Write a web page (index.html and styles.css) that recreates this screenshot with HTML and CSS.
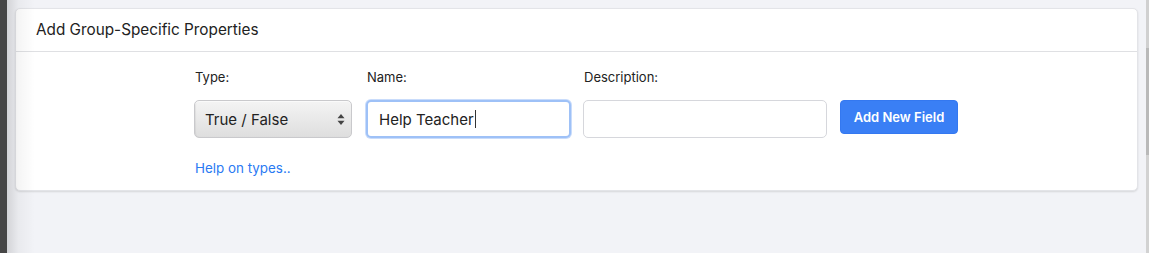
FILE: index.html
```html
<!DOCTYPE html>
<html>
<head>
<meta charset="utf-8">
<link rel="stylesheet" href="styles.css">
</head>
<body>
<div class="frame">
  <div class="edge"></div>
  <main class="page">
    <div class="shade"></div>
    <section class="card">
      <header class="card-header">Add Group-Specific Properties</header>
      <div class="card-body">
        <div class="fields">
          <div class="field f-type">
            <label class="lbl">Type:</label>
            <div class="select">
              <span>True / False</span>
              <svg class="arrows" width="8" height="13" viewBox="0 0 8 13"><path d="M4 1 L7.5 5.2 L0.5 5.2 Z" fill="#444"/><path d="M4 12 L7.5 7.8 L0.5 7.8 Z" fill="#444"/></svg>
            </div>
          </div>
          <div class="field f-name">
            <label class="lbl">Name:</label>
            <div class="input focused"><span>Help Teacher</span><i class="caret"></i></div>
          </div>
          <div class="field f-desc">
            <label class="lbl">Description:</label>
            <div class="input"></div>
          </div>
          <div class="field f-btn">
            <button class="btn">Add New Field</button>
          </div>
        </div>
        <a class="help" href="#">Help on types..</a>
      </div>
    </section>
  </main>
  <div class="scroll"></div>
</div>
</body>
</html>
```
FILE: styles.css
```css
* { box-sizing: border-box; }
html, body { margin: 0; padding: 0; }
body {
  width: 1149px;
  height: 253px;
  overflow: hidden;
  background: #f2f3f7;
  font-family: Inter, "Liberation Sans", Arial, sans-serif;
  color: #222;
}
.frame {
  display: flex;
  height: 253px;
}
.edge {
  width: 7px;
  flex: none;
  background: #464646;
}
.page {
  position: relative;
  flex: 1;
  padding: 8px 8px 0 8px;
  background: #f2f3f7;
}
.shade {
  position: absolute;
  left: 0; top: 0; bottom: 0;
  width: 28px;
  background: linear-gradient(to right, rgba(0,0,0,0.13), rgba(0,0,0,0.04) 40%, rgba(0,0,0,0));
  pointer-events: none;
  z-index: 2;
}
.scroll {
  width: 3px;
  flex: none;
  background: linear-gradient(to bottom, #d0d0d0 0, #d0d0d0 48px, #b9b9b9 48px, #b9b9b9 155px, #d2d2d2 155px);
}
.card {
  background: #fff;
  border: 1px solid #e3e4e8;
  border-radius: 5px;
  box-shadow: 0 1px 2px rgba(0,0,0,0.12);
  height: 183px;
}
.card-header {
  height: 43px;
  padding: 11px 0 0 20px;
  font-size: 15.3px;
  color: #222;
  border-bottom: 1px solid #dfe0e3;
}
.card-body {
  padding: 18px 0 0 178px;
}
.fields {
  display: flex;
  align-items: flex-start;
}
.field { display: flex; flex-direction: column; }
.lbl {
  font-size: 13px;
  line-height: 15px;
  height: 15px;
  margin: 0 0 15px 1px;
  color: #222;
}
.f-type { width: 158px; margin-right: 14px; }
.f-name { width: 205px; margin-right: 12px; }
.f-desc { width: 244px; margin-right: 13px; }
.f-btn { padding-top: 30px; }
.select {
  height: 38px;
  border: 1px solid #c9c9cc;
  border-radius: 5px;
  background: linear-gradient(to bottom, #f4f4f4 0%, #e9e9e9 50%, #dedede 100%);
  box-shadow: inset 0 1px 0 #fafafa, inset 1px 0 1px rgba(0,0,0,0.06);
  display: flex;
  align-items: center;
  justify-content: space-between;
  padding: 0 6px 0 10px;
  font-size: 15px;
  color: #222;
}
.arrows { display: block; }
.input {
  height: 38px;
  border: 1px solid #d6d7dc;
  border-radius: 5px;
  background: #fff;
  display: flex;
  align-items: center;
  padding: 0 12px;
  font-size: 15px;
  color: #222;
}
.input.focused {
  border: 2px solid #9ec1f7;
  box-shadow: 0 0 0 1px #c9dcfb;
  padding-left: 11px;
}
.caret {
  display: inline-block;
  width: 1px;
  height: 18px;
  background: #333;
  margin-left: 1px;
}
.btn {
  height: 34px;
  width: 118px;
  border: 1px solid #3478f0;
  border-radius: 4px;
  background: #3a7ff5;
  color: #fff;
  font-family: Inter, "Liberation Sans", Arial, sans-serif;
  font-size: 13px;
  font-weight: 600;
  padding: 0;
}
.help {
  display: inline-block;
  margin: 22px 0 0 1px;
  font-size: 13.4px;
  color: #2a7af3;
  text-decoration: none;
}
```
